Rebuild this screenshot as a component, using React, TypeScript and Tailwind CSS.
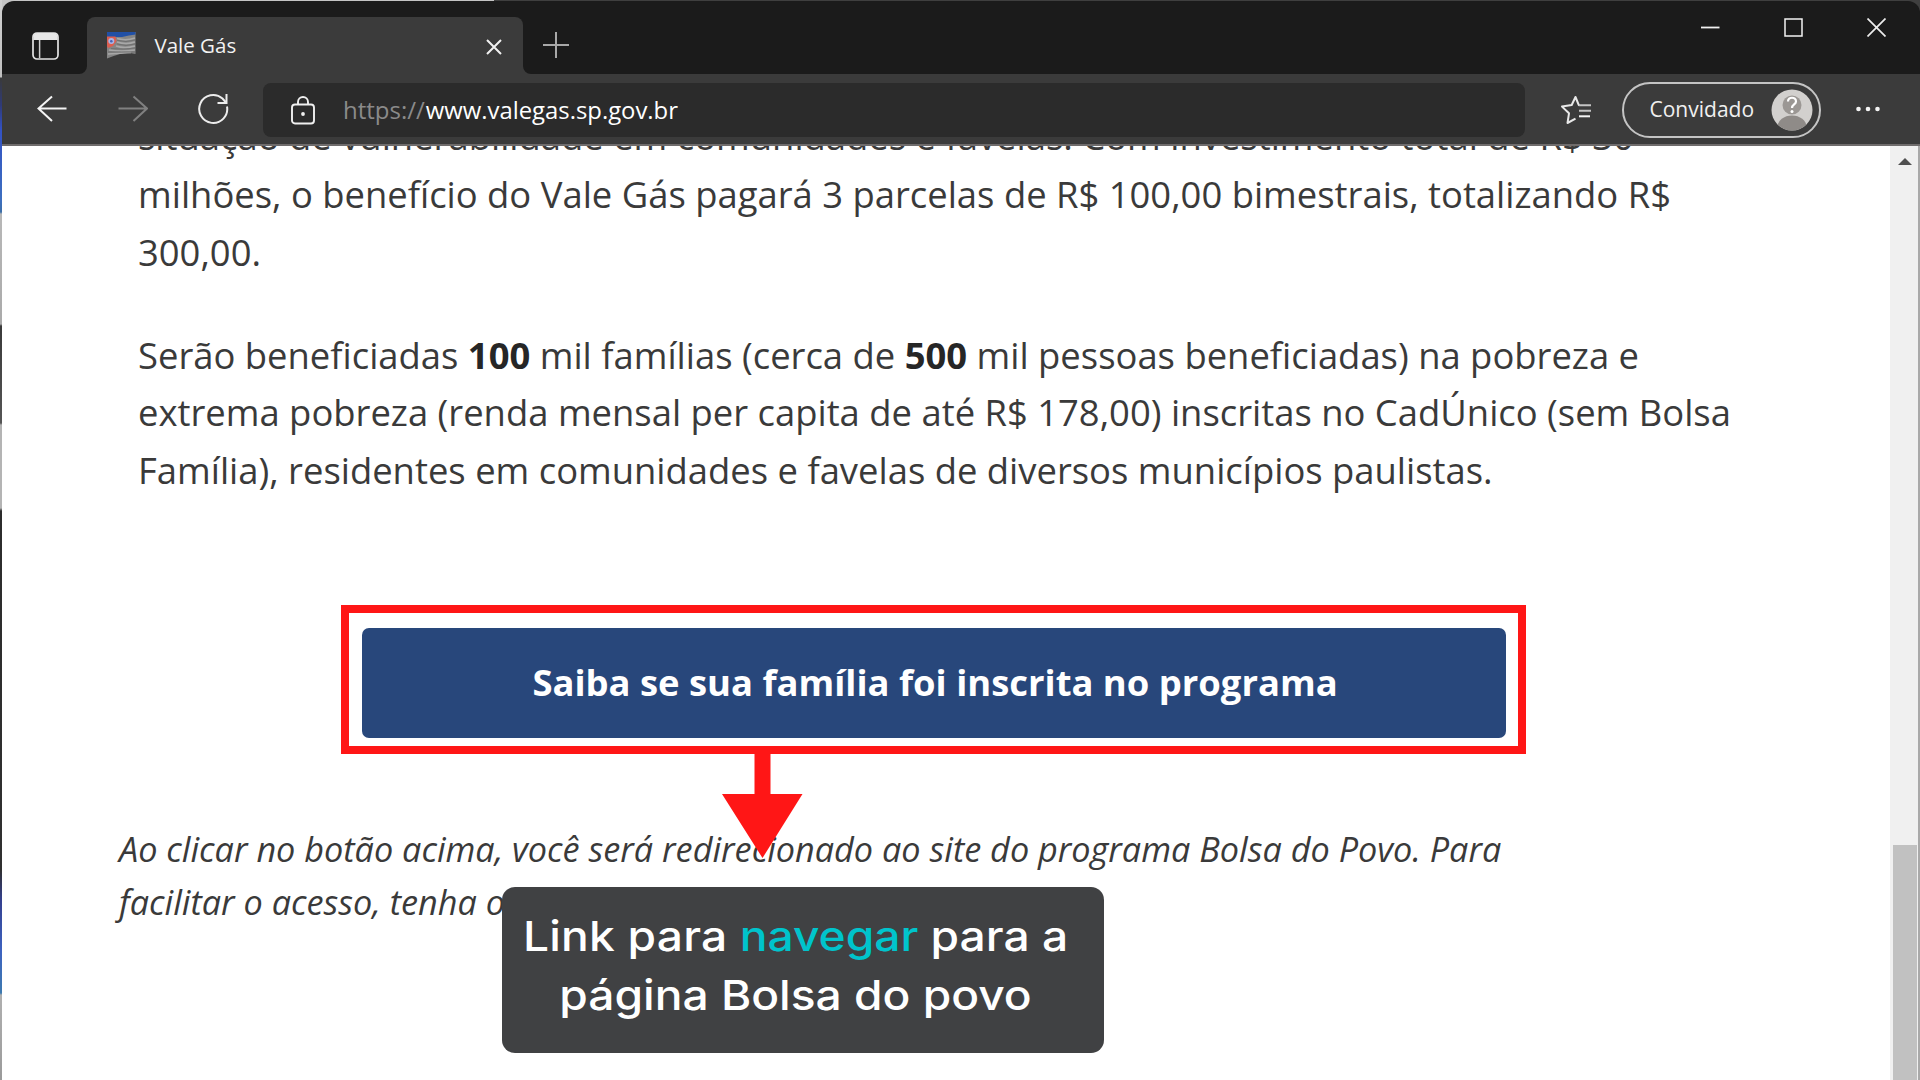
import type { ReactNode } from "react";

function Line({ children }: { children: ReactNode }) {
  return <span className="block whitespace-nowrap">{children}</span>;
}

function SidebarIcon() {
  return (
    <svg className="ml-[30px] mt-[31px] h-[28px] w-[27px]" viewBox="0 0 27 28" fill="none">
      <rect x="1" y="1" width="25" height="26" rx="4" stroke="#e4e4e4" strokeWidth="1.7" />
      <path d="M1.5 8V5a4 4 0 0 1 4-4h16a4 4 0 0 1 4 4v3z" fill="#e8e8e8" />
      <path d="M7.6 8v18" stroke="#d0d0d0" strokeWidth="1.5" />
    </svg>
  );
}

function FlagIcon() {
  return (
    <svg className="h-[27px] w-[29px]" viewBox="0 0 29 27">
      <path d="M0 0H28.5V22Q20 20 13 22T0 26.500Z" fill="#858585" />
      <path
        d="M10 6.500Q19 9 28 6M10 10Q19 13 28 10M9 14Q18 17 28 14M2 18Q15 20 28 18M1 22Q12 21 24 20.500"
        stroke="#a8a8a8"
        strokeWidth="1.500"
        fill="none"
      />
      <path
        d="M10 8.300Q19 11 28 8M10 12Q19 15 28 12M4 16.500Q17 18 28 16M1 20Q14 20 28 20"
        stroke="#6e6e6e"
        strokeWidth="0.900"
        fill="none"
      />
      <path d="M0 5H15Q22 3 28.500 2.500V0H0Z" fill="#2150a6" />
      <path d="M0 4.500H8.500L9.500 9L6 14L1 16L0 14Z" fill="#dc5e50" />
      <circle cx="4.300" cy="9" r="3" fill="#a9b6e8" />
      <circle cx="4.300" cy="9.300" r="1.300" fill="#4a63b5" />
    </svg>
  );
}

function TitleBar() {
  return (
    <div className="flex h-[73px] shrink-0 rounded-t-[12px] bg-[#1b1b1b]">
      <div className="flex h-[73px] w-[84.500px] shrink-0 rounded-tl-[12px]">
        <SidebarIcon />
      </div>
      <div className="relative mt-[16px] flex h-[57px] w-[436px] shrink-0 items-center rounded-t-[8px] bg-[#3b3b3b]">
        <svg className="absolute -left-[8px] bottom-0 h-[8px] w-[8px]" viewBox="0 0 8 8">
          <path d="M8 0V8H0A8 8 0 0 0 8 0Z" fill="#3b3b3b" />
        </svg>
        <svg className="absolute -right-[8px] bottom-0 h-[8px] w-[8px]" viewBox="0 0 8 8">
          <path d="M0 0V8H8A8 8 0 0 1 0 0Z" fill="#3b3b3b" />
        </svg>
        <div className="ml-[20.500px] flex w-[47.500px] items-center">
          <FlagIcon />
        </div>
        <span className="mb-[1px] text-[20.5px] leading-[28px] text-[#f2f2f2]">Vale Gás</span>
        <svg className="ml-auto mr-[21px] mt-[2px] h-[16px] w-[16px]" viewBox="0 0 16 16">
          <path d="M1 1L15 15M15 1L1 15" stroke="#f0f0f0" strokeWidth="2" />
        </svg>
      </div>
      <svg className="ml-[20px] mt-[31px] h-[26px] w-[26px]" viewBox="0 0 26 26">
        <path d="M0 13H26M13 0V26" stroke="#a8a8a8" strokeWidth="2" />
      </svg>
      <div className="ml-auto mr-[34px] mt-[17px] flex h-[19px] gap-[64px]">
        <svg className="h-[19px] w-[19px]" viewBox="0 0 19 19">
          <path d="M0 9.500H18.500" stroke="#f0f0f0" strokeWidth="1.800" />
        </svg>
        <svg className="h-[19px] w-[19px]" viewBox="0 0 19 19" fill="none">
          <rect x="1" y="1" width="17" height="17" stroke="#f4f4f4" strokeWidth="1.500" />
        </svg>
        <svg className="h-[19px] w-[19px]" viewBox="0 0 19 19">
          <path d="M0.500 0.500L18.500 18.500M18.500 0.500L0.500 18.500" stroke="#ececec" strokeWidth="1.700" />
        </svg>
      </div>
    </div>
  );
}

function Toolbar() {
  return (
    <div className="flex h-[72px] shrink-0 items-start border-b-2 border-[#6f6c6c] bg-[#3b3b3b] pl-[35px]">
      <svg className="mt-[21px] h-[28px] w-[30px]" viewBox="0 0 30 28" fill="none">
        <path d="M29.500 13.500H1.500M15 1.500L1.500 13.500L15 26" stroke="#f4f4f4" strokeWidth="2" />
      </svg>
      <svg className="ml-[51px] mt-[21px] h-[28px] w-[30px]" viewBox="0 0 30 28" fill="none">
        <path d="M0.500 13.500H28.500M15.500 1.500L29 13.500L15.500 26" stroke="#808080" strokeWidth="2" />
      </svg>
      <svg className="ml-[49px] mt-[19px] h-[32px] w-[32px]" viewBox="0 0 32 32" fill="none">
        <path d="M30 13.500A14 14 0 1 1 25.500 5.500L29 9.500" stroke="#ececec" strokeWidth="2" />
        <path d="M29.500 1V10H20.500" stroke="#ececec" strokeWidth="2" />
      </svg>
      <div className="ml-[34px] mt-[9px] flex h-[54px] w-[1262px] items-center rounded-[8px] bg-[#2b2b2b]">
        <svg className="ml-[28px] h-[29px] w-[24px]" viewBox="0 0 24 29" fill="none">
          <rect x="1" y="8.500" width="22" height="19" rx="3" stroke="#f0f0f0" strokeWidth="1.900" />
          <path d="M7 8.500V6a5 5 0 0 1 10 0v2.500" stroke="#f0f0f0" strokeWidth="1.900" />
          <circle cx="12" cy="18" r="1.900" fill="#f0f0f0" />
        </svg>
        <span className="ml-[28px] mr-px text-[24px] leading-[34px] text-[#8a8a8a]">https://</span>
        <span className="text-[23.85px] leading-[34px] text-white">www.valegas.sp.gov.br</span>
      </div>
      <svg className="ml-[35px] mt-[20px] h-[32px] w-[32px]" viewBox="0 0 32 32" fill="none">
        <path
          d="M19.500 11.300L18.700 10.800L15.500 3L11.700 11L2 12.600L9 19.300L7.500 29L15.500 24.700"
          stroke="#e8e8e8"
          strokeWidth="2"
          strokeLinejoin="round"
        />
        <path d="M19 11.300H31M19 16.800H31" stroke="#c4c4c4" strokeWidth="2" />
        <path d="M19 22.300H30" stroke="#f4f4f4" strokeWidth="2" />
      </svg>
      <div className="ml-[30px] mt-[7.500px] flex h-[56px] w-[199px] items-center rounded-full border-2 border-[#c4c4c4]">
        <span className="ml-[25.500px] w-[122.500px] text-[21px] leading-[28px] text-[#f0f0f0]">
          <span className="block -translate-y-px">Convidado</span>
        </span>
        <svg className="-ml-[1px] h-[42px] w-[42px]" viewBox="0 0 42 42">
          <defs>
            <clipPath id="avatar">
              <circle cx="21" cy="21" r="20.500" />
            </clipPath>
          </defs>
          <g clipPath="url(#avatar)">
            <rect width="42" height="42" fill="#d2d0ce" />
            <circle cx="21" cy="16" r="9.500" fill="#9b9794" />
            <ellipse cx="21" cy="38" rx="14.500" ry="11.500" fill="#8f8b88" />
          </g>
          <path
            d="M17 12.500C17 7.500 25 7.500 25 12.500C25 15.500 21 15.500 21 19"
            fill="none"
            stroke="#fff"
            strokeWidth="2.200"
          />
          <circle cx="21" cy="22.500" r="1.500" fill="#fff" />
        </svg>
      </div>
      <svg className="ml-[34px] mt-[32px] h-[6px] w-[26px]" viewBox="0 0 26 6">
        <circle cx="3.500" cy="3" r="2.300" fill="#f4f4f4" />
        <circle cx="13" cy="3" r="2.300" fill="#f4f4f4" />
        <circle cx="22.500" cy="3" r="2.300" fill="#f4f4f4" />
      </svg>
    </div>
  );
}

function Scrollbar() {
  return (
    <div className="flex w-[30px] shrink-0 flex-col border-r-2 border-[#a9a9a9] bg-[#f0f0f0]">
      <svg className="ml-[8px] mt-[12px] h-[7px] w-[14px] shrink-0" viewBox="0 0 14 7">
        <path d="M0 7L7 0L14 7Z" fill="#505050" />
      </svg>
      <div className="ml-[3px] mt-[680px] w-[24px] grow bg-[#c1c1c1]" />
    </div>
  );
}

function Article() {
  return (
    <main className="flex grow flex-col overflow-hidden bg-white text-[#3a3a3a]">
      <p className="-mt-[38px] ml-[136px] text-[36.4px] leading-[57.8px]">
        <Line>situação de vulnerabilidade em comunidades e favelas. Com investimento total de R$ 30</Line>
        <Line>milhões, o benefício do Vale Gás pagará 3 parcelas de R$ 100,00 bimestrais, totalizando R$</Line>
        <Line>300,00.</Line>
      </p>
      <p className="ml-[136px] mt-[45.200px] text-[36.4px] leading-[57.8px]">
        <Line>
          Serão beneficiadas <b className="text-[#262626]">100</b> mil famílias (cerca de{" "}
          <b className="text-[#262626]">500</b> mil pessoas beneficiadas) na pobreza e
        </Line>
        <Line>extrema pobreza (renda mensal per capita de até R$ 178,00) inscritas no CadÚnico (sem Bolsa</Line>
        <Line>Família), residentes em comunidades e favelas de diversos municípios paulistas.</Line>
      </p>
      <div className="ml-[339px] mt-[105px] flex h-[149px] w-[1185px] shrink-0 border-8 border-[#ff1616] pl-[13px] pt-[15px]">
        <button className="flex h-[110px] w-[1144px] shrink-0 items-center justify-center rounded-[7px] bg-[#28477b] pb-px pl-[2px] text-[36.4px] font-bold leading-[50px] text-white">
          Saiba se sua família foi inscrita no programa
        </button>
      </div>
      <p className="ml-[117px] mt-[68px] text-[34.23px] italic leading-[53px]">
        <Line>Ao clicar no botão acima, você será redirecionado ao site do programa Bolsa do Povo. Para</Line>
        <Line>facilitar o acesso, tenha o</Line>
      </p>
    </main>
  );
}

function Annotation() {
  return (
    <>
      <svg className="absolute left-[722px] top-[753px] h-[106px] w-[81px]" viewBox="0 0 81 106">
        <path d="M32.500 0H48.500V41H80.500L40.500 105L0 41H32.500Z" fill="#ff1616" />
      </svg>
      <div className="absolute left-[502px] top-[886.500px] flex h-[166px] w-[602px] flex-col rounded-[13px] bg-[#404143] pr-[15px] pt-[20.500px] text-center font-['Inter',sans-serif] text-[41px] font-[540] leading-[59px] text-white">
        <p className="scale-x-[1.125] whitespace-nowrap">
          <span className="tracking-[0.2px]">Link para</span> <span className="text-[#00c4cc]">navegar</span> para a
        </p>
        <p className="scale-x-[1.125] whitespace-nowrap">página Bolsa do povo</p>
      </div>
    </>
  );
}

export default function App() {
  return (
    <div className="relative flex h-[1080px] w-[1920px] overflow-hidden bg-[linear-gradient(90deg,#c4c4c4_0,#c4c4c4_494px,#3f3f3f_494px)] pt-[2px] font-['Open_Sans',sans-serif]">
      <div className="-mt-[2px] w-[2px] shrink-0 bg-[linear-gradient(#d0d0d0_0,#c0c0c0_77px,#3a3a3a_78px,#2f3a78_105px,#3352c4_130px,#3d6fc0_200px,#3d6fa8_212px,#b8b8b8_214px,#aaaaaa_324px,#3a3a3a_326px,#555_423px,#b4b4b4_425px,#b4b4b4_508px,#2c2c2c_511px,#303030_870px,#34408f_900px,#3d62c0_950px,#3d7ab0_993px,#b0b0b0_995px,#9a9a9a_1080px)]" />
      <div className="-mt-px flex w-[1918px] shrink-0 flex-col">
        <TitleBar />
        <Toolbar />
        <div className="flex min-h-0 grow">
          <Article />
          <Scrollbar />
        </div>
      </div>
      <Annotation />
    </div>
  );
}
